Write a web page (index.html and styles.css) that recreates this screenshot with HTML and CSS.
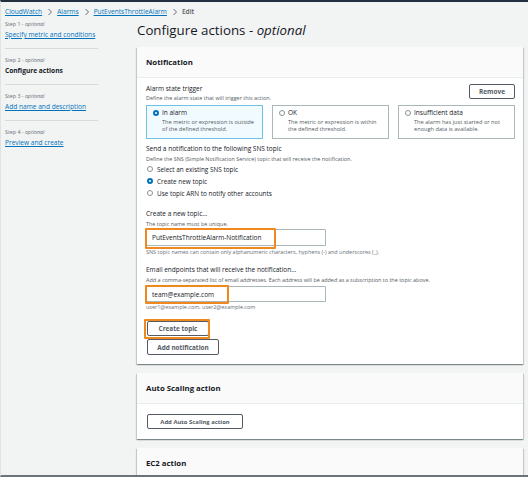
FILE: index.html
```html
<!DOCTYPE html>
<html lang="en">
<head>
<meta charset="utf-8">
<title>Configure actions</title>
<link rel="stylesheet" href="styles.css">
</head>
<body>
<div class="page">
  <nav class="crumbs">
    <a class="crumb-link">CloudWatch</a>
    <svg class="chev" viewBox="0 0 6 8" width="6" height="8"><polyline points="1.5,1 4.5,4 1.5,7" fill="none" stroke="#687078" stroke-width="1"/></svg>
    <a class="crumb-link">Alarms</a>
    <svg class="chev" viewBox="0 0 6 8" width="6" height="8"><polyline points="1.5,1 4.5,4 1.5,7" fill="none" stroke="#687078" stroke-width="1"/></svg>
    <a class="crumb-link">PutEventsThrottleAlarm</a>
    <svg class="chev" viewBox="0 0 6 8" width="6" height="8"><polyline points="1.5,1 4.5,4 1.5,7" fill="none" stroke="#687078" stroke-width="1"/></svg>
    <span class="crumb-current">Edit</span>
  </nav>
  <div class="layout">
    <aside class="steps">
      <div class="step">
        <div class="step-label">Step 1 - <em>optional</em></div>
        <a class="step-link">Specify metric and conditions</a>
      </div>
      <div class="step">
        <div class="step-label">Step 2 - <em>optional</em></div>
        <div class="step-current">Configure actions</div>
      </div>
      <div class="step">
        <div class="step-label">Step 3 - <em>optional</em></div>
        <a class="step-link">Add name and description</a>
      </div>
      <div class="step last">
        <div class="step-label">Step 4 - <em>optional</em></div>
        <a class="step-link">Preview and create</a>
      </div>
    </aside>
    <main class="main">
      <h1 class="title">Configure actions - <em>optional</em></h1>

      <section class="card">
        <div class="card-head">Notification</div>
        <div class="card-body notif-body">
          <div class="trigger-row">
            <div>
              <div class="label">Alarm state trigger</div>
              <div class="desc">Define the alarm state that will trigger this action.</div>
            </div>
            <button class="btn remove">Remove</button>
          </div>
          <div class="tiles">
            <div class="tile selected">
              <span class="radio on"></span>
              <div>
                <div class="tile-title">In alarm</div>
                <div class="tile-desc">The metric or expression is outside<br>of the defined threshold.</div>
              </div>
            </div>
            <div class="tile">
              <span class="radio"></span>
              <div>
                <div class="tile-title">OK</div>
                <div class="tile-desc">The metric or expression is within<br>the defined threshold.</div>
              </div>
            </div>
            <div class="tile">
              <span class="radio"></span>
              <div>
                <div class="tile-title">Insufficient data</div>
                <div class="tile-desc">The alarm has just started or not<br>enough data is available.</div>
              </div>
            </div>
          </div>

          <div class="label sns-label">Send a notification to the following SNS topic</div>
          <div class="desc">Define the SNS (Simple Notification Service) topic that will receive the notification.</div>
          <div class="radio-list">
            <div class="radio-row"><span class="radio"></span>Select an existing SNS topic</div>
            <div class="radio-row"><span class="radio on"></span>Create new topic</div>
            <div class="radio-row"><span class="radio"></span>Use topic ARN to notify other accounts</div>
          </div>

          <div class="label field-label">Create a new topic…</div>
          <div class="desc">The topic name must be unique.</div>
          <div class="input-wrap topic">
            <div class="input">PutEventsThrottleAlarm-Notification</div>
            <span class="mark mark-topic"></span>
          </div>
          <div class="hint">SNS topic names can contain only alphanumeric characters, hyphens (-) and underscores (_).</div>

          <div class="label field-label email-label">Email endpoints that will receive the notification…</div>
          <div class="desc">Add a comma-separated list of email addresses. Each address will be added as a subscription to the topic above.</div>
          <div class="input-wrap email">
            <div class="input">team@example.com</div>
            <span class="mark mark-email"></span>
          </div>
          <div class="hint hint-email">user1@example.com, user2@example.com</div>

          <div class="btn-wrap">
            <button class="btn create">Create topic</button>
            <span class="mark mark-btn"></span>
          </div>
          <button class="btn add-notif">Add notification</button>
        </div>
      </section>

      <section class="card">
        <div class="card-head">Auto Scaling action</div>
        <div class="card-body as-body">
          <button class="btn add-as">Add Auto Scaling action</button>
        </div>
      </section>

      <section class="card">
        <div class="card-head">EC2 action</div>
        <div class="card-body"></div>
      </section>
    </main>
  </div>
</div>
</body>
</html>
```
FILE: styles.css
```css
* { box-sizing: border-box; }
html, body { margin: 0; padding: 0; }
body {
  background: #f2f3f3;
  font-family: "Open Sans", "Liberation Sans", sans-serif;
  color: #16191f;
}
.page {
  width: 528px;
  height: 477px;
  overflow: hidden;
  border-top: 2px solid #232f3e;
  border-bottom: 2px solid #6d7378;
  border-left: 1px solid #dfe3e3;
  background: #f2f3f3;
}
.crumbs {
  display: flex;
  align-items: center;
  height: 16px;
  padding: 4px 0 0 4px;
  font-size: 6.6px;
  line-height: 12px;
}
.crumb-link { color: #0073bb; text-decoration: underline; }
.chev { margin: 0 4px 0 5px; }
.crumb-current { color: #545b64; font-weight: 600; }

.layout { display: flex; align-items: flex-start; }
.steps {
  width: 93px;
  margin-left: 4px;
  margin-right: 39px;
  flex: none;
}
.step {
  padding: 2px 0 8px;
  border-bottom: 1px solid #d5dbdb;
}
.step + .step { padding-top: 7px; }
.step.last { border-bottom: none; }
.step-label {
  font-size: 5.3px;
  line-height: 8px;
  color: #687078;
}
.step-label em { font-style: italic; }
.step-link, .step-current {
  display: block;
  margin-top: 2px;
  font-size: 6.6px;
  line-height: 10px;
  white-space: nowrap;
}
.step-link { color: #0073bb; text-decoration: underline; }
.step-current { font-weight: 700; color: #16191f; }

.main { width: 386px; flex: none; }
.title {
  margin: 0 0 7px;
  padding-top: 2px;
  font-size: 13.3px;
  line-height: 20px;
  font-weight: 400;
  color: #16191f;
  white-space: nowrap;
}
.title em { font-style: italic; }

.card {
  background: #fff;
  margin-bottom: 9px;
  box-shadow: 0 1px 1px 0 rgba(0, 28, 36, 0.3), 1px 1px 1px 0 rgba(0, 28, 36, 0.15), -1px 1px 1px 0 rgba(0, 28, 36, 0.15);
}
.card-head {
  height: 31px;
  padding: 0 9px;
  display: flex;
  align-items: center;
  background: #fafafa;
  border-bottom: 1px solid #eaeded;
  font-size: 7.8px;
  font-weight: 700;
}
.card-body { padding: 10px 8px 10px 9px; }
.notif-body { padding: 6px 8px 9px 9px; }

.label { font-size: 6.5px; line-height: 10px; }
.desc { font-size: 5.45px; line-height: 8px; color: #545b64; margin-top: 1px; white-space: nowrap; }
.trigger-row { display: flex; justify-content: space-between; align-items: flex-start; }
.trigger-row .desc { margin-top: 0; }

.btn {
  display: flex;
  align-items: center;
  justify-content: center;
  background: #fff;
  border: 1px solid #545b64;
  border-radius: 2px;
  color: #545b64;
  font-family: "Open Sans", "Liberation Sans", sans-serif;
  font-weight: 700;
  font-size: 6.4px;
  padding: 0;
}
.remove { width: 46px; height: 15px; font-size: 6.5px; }

.tiles {
  display: grid;
  grid-template-columns: 1fr 1fr 1fr;
  gap: 9px;
  margin-top: 3px;
}
.tile {
  height: 34px;
  border: 1px solid #aab7b8;
  display: flex;
  align-items: flex-start;
  gap: 3px;
  padding: 2px 0 0 6px;
}
.tile.selected { background: #f1faff; border-color: #6fc2e4; }
.tile .radio { margin-top: 2px; }
.tile-title { font-size: 6.5px; line-height: 10px; }
.tile-desc { font-size: 5.65px; line-height: 7px; color: #545b64; margin-top: 1px; white-space: nowrap; }

.radio {
  flex: none;
  display: inline-block;
  width: 6px;
  height: 6px;
  border-radius: 50%;
  border: 1px solid #879596;
  background: #fff;
}
.radio.on { border: 2px solid #0073bb; }

.sns-label { margin-top: 5px; }
.radio-list { display: flex; flex-direction: column; }
.radio-row {
  display: flex;
  align-items: center;
  gap: 4px;
  height: 12px;
  padding-left: 1px;
  font-size: 6.4px;
}

.field-label { margin-top: 10px; }
.email-label { margin-top: 9px; }
.input-wrap { position: relative; width: 180px; margin-top: 1px; }
.input {
  height: 17px;
  border: 1px solid #aab7b8;
  border-radius: 1px;
  padding-left: 5px;
  display: flex;
  align-items: center;
  font-size: 6.5px;
  color: #16191f;
}
.input-wrap.email { margin-top: 2px; }
.input-wrap.email .input { height: 16px; }
.hint { font-size: 5.45px; line-height: 8px; color: #687078; margin-top: 2px; white-space: nowrap; }
.hint-email { margin-top: 1px; }

.mark {
  position: absolute;
  border: 2px solid #f0891d;
  border-radius: 1px;
  pointer-events: none;
}
.mark-topic { left: -1px; top: -1px; width: 131px; height: 21px; }
.mark-email { left: -1px; top: -1px; width: 84px; height: 19px; }
.btn-wrap { position: relative; width: 62px; margin-top: 10px; margin-left: 1px; }
.mark-btn { left: -3px; top: -2px; width: 66px; height: 20px; }
.create { width: 62px; height: 15px; }
.add-notif { width: 72px; height: 16px; margin-top: 3px; margin-left: 1px; }

.as-body { padding: 10px 8px 10px 10px; }
.add-as { width: 96px; height: 15px; font-size: 5.9px; }
```
